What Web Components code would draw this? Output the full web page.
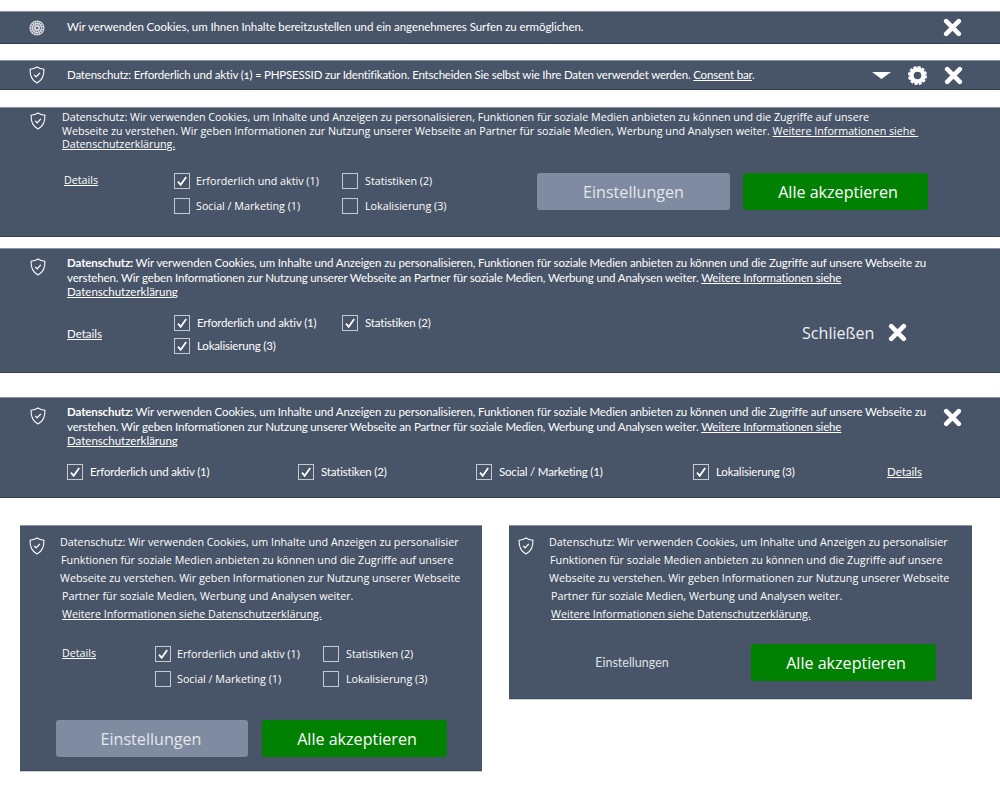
<!DOCTYPE html>
<html>
<head>
<meta charset="utf-8">
<style>
  html, body { margin: 0; padding: 0; background: #fff; }
  body { width: 1000px; height: 802px; overflow: hidden; font-family: "Open Sans", sans-serif; color: #fff; }
  .top1 { margin-top: 11px; height: 33px; --act-pad: 38px; --txt-pb: 1px; }
  .top2 { margin-top: 16px; height: 30px; }
  .top3 { margin-top: 17px; }
  .top4 { margin-top: 11px; }
  .top5 { margin-top: 24px; }
  .boxes { display: flex; align-items: flex-start; gap: 27px; margin: 27px 0 0 20px; }
</style>
</head>
<body>
  <cookie-bar class="top1" icon="cookie" style="--ls:-.07px">Wir verwenden Cookies, um Ihnen Inhalte bereitzustellen und ein angenehmeres Surfen zu ermöglichen.
    <close-x slot="actions"></close-x>
  </cookie-bar>

  <cookie-bar class="top2" icon="shield" style="--ls:-.19px">Datenschutz: Erforderlich und aktiv (1) = PHPSESSID zur Identifikation. Entscheiden Sie selbst wie Ihre Daten verwendet werden. <u>Consent bar</u>.
    <bar-actions slot="actions"></bar-actions>
  </cookie-bar>

  <banner-full class="top3"></banner-full>
  <banner-saved class="top4"></banner-saved>
  <banner-row class="top5"></banner-row>

  <div class="boxes">
    <cookie-box details="1"></cookie-box>
    <cookie-box style="width:463px"></cookie-box>
  </div>

<script>
  const SHIELD = `<svg width="16" height="18" viewBox="0 0 18 20" fill="none" stroke="#fff" stroke-width="1.2" style="display:block"><path d="M9 1C6.6 2.6 4 3.3 1.2 3.5C1 10 2.6 15.8 9 19C15.4 15.8 17 10 16.8 3.5C14 3.3 11.4 2.6 9 1Z"/><path d="M5.9 9.9L8 12.1L12.2 7.6" stroke-width="1.5"/></svg>`;
  const COOKIE = `<svg width="16" height="16" viewBox="0 0 16 16" style="display:block"><circle cx="8" cy="8" r="7.6" fill="#d4d8de"/><circle cx="8" cy="8" r="5.8" fill="none" stroke="#566074" stroke-width="1.1" stroke-dasharray="1.3 1"/><circle cx="8" cy="8" r="3.5" fill="none" stroke="#566074" stroke-width="1.1" stroke-dasharray="1.2 1"/><circle cx="8" cy="8" r="1.2" fill="#566074"/></svg>`;
  const CROSS = `<svg width="19" height="19" viewBox="0 0 19 19" style="display:block"><path d="M3.2 3.2L15.8 15.8M15.8 3.2L3.2 15.8" stroke="#fff" stroke-width="4.6" stroke-linecap="round"/></svg>`;
  const GRID_ITEMS = (a, b, c, d) => `
    <check-item ${a ? 'on' : ''}>Erforderlich und aktiv (1)</check-item><check-item ${b ? 'on' : ''}>Statistiken (2)</check-item>
    <check-item ${c ? 'on' : ''}>Social / Marketing (1)</check-item><check-item ${d ? 'on' : ''}>Lokalisierung (3)</check-item>`;
  const LONG = `<span style="letter-spacing:-.115px"><b>Datenschutz:</b> Wir verwenden Cookies, um Inhalte und Anzeigen zu personalisieren, Funktionen für soziale Medien anbieten zu können und die Zugriffe auf unsere Webseite zu</span><br><span style="letter-spacing:-.14px">verstehen. Wir geben Informationen zur Nutzung unserer Webseite an Partner für soziale Medien, Werbung und Analysen weiter. <u>Weitere Informationen siehe</u></span><br><u>Datenschutzerklärung</u>`;
  const PANEL = `background:#485467;border-top:1px solid #8a93a1;border-bottom:1px solid #343d4c;box-sizing:border-box;color:#fff;`;
  const SANS = `10.72px/16px "Open Sans",sans-serif`;
  const RALE = `11.5px/16px Lato,sans-serif`;

  class CloseX extends HTMLElement {
    connectedCallback() {
      this.attachShadow({ mode: 'open' }).innerHTML = `<style>:host{display:block;width:19px;height:19px;flex:none}</style>${CROSS}`;
    }
  }
  customElements.define('close-x', CloseX);

  class BarActions extends HTMLElement {
    connectedCallback() {
      this.attachShadow({ mode: 'open' }).innerHTML = `
        <style>:host{display:flex;align-items:center;gap:17px}</style>
        <svg width="19" height="7" viewBox="0 0 19 7"><path d="M0 0H19L9.5 7Z" fill="#fff"/></svg>
        <svg width="19" height="19" viewBox="0 0 19 19"><circle cx="9.5" cy="9.5" r="6" fill="none" stroke="#fff" stroke-width="4.4"/><circle cx="9.5" cy="9.5" r="8.6" fill="none" stroke="#fff" stroke-width="1.8" stroke-dasharray="3 1.5"/></svg>
        <close-x></close-x>`;
    }
  }
  customElements.define('bar-actions', BarActions);

  class CookieBar extends HTMLElement {
    connectedCallback() {
      const icon = this.getAttribute('icon') === 'cookie' ? COOKIE : SHIELD;
      this.attachShadow({ mode: 'open' }).innerHTML = `
        <style>
          :host{display:flex;align-items:center;${PANEL}font:${RALE};letter-spacing:var(--ls,0);font-variant-numeric:oldstyle-nums}
          .ico{width:67px;display:flex;padding-left:29px;box-sizing:border-box;flex:none}
          .txt{flex:1;white-space:nowrap;padding-bottom:var(--txt-pb,0)}
          .act{padding-right:var(--act-pad,37px);display:flex;align-items:center}
        </style>
        <div class="ico">${icon}</div>
        <div class="txt"><slot></slot></div>
        <div class="act"><slot name="actions"></slot></div>`;
    }
  }
  customElements.define('cookie-bar', CookieBar);

  class CheckItem extends HTMLElement {
    connectedCallback() {
      const on = this.hasAttribute('on');
      this.attachShadow({ mode: 'open' }).innerHTML = `
        <style>
          :host{display:inline-flex;align-items:center;gap:var(--check-gap,6px);white-space:nowrap;font:var(--check-font,${SANS});letter-spacing:var(--check-ls,0);color:#fff}
          .b{width:16px;height:16px;border:1px solid #c4c9d1;box-sizing:border-box;flex:none;display:block}
        </style>
        <svg class="b" viewBox="0 0 14 14">${on ? '<path d="M3 7.6L5.7 10.8L11.2 3" fill="none" stroke="#fff" stroke-width="1.8"/>' : ''}</svg>
        <span><slot></slot></span>`;
    }
  }
  customElements.define('check-item', CheckItem);

  class ActionButton extends HTMLElement {
    connectedCallback() {
      this.attachShadow({ mode: 'open' }).innerHTML = `
        <style>
          :host{display:flex;align-items:center;justify-content:center;height:37px;box-sizing:border-box;border-radius:3px;font:16.1px/20px "Open Sans",sans-serif;white-space:nowrap;background:#7f8ba0;color:#e4e7eb}
          :host([green]){background:#008000;color:#fff;padding-left:5px}
          :host([plain]){background:none;color:#dfe2e7;font:12.5px/16px Lato,sans-serif}
        </style><slot></slot>`;
    }
  }
  customElements.define('action-button', ActionButton);

  class BannerFull extends HTMLElement {
    connectedCallback() {
      this.attachShadow({ mode: 'open' }).innerHTML = `
        <style>
          :host{display:block;height:130px;${PANEL}padding-top:3px}
          .head{display:flex;gap:16px;padding-left:30px}
          .head svg{flex:none;margin-top:1px}
          .txt{font:10.72px/13.5px "Open Sans",sans-serif;white-space:nowrap}
          .row{display:flex;margin-top:21.5px;padding-left:64px}
          a{width:110px;font:${SANS};text-decoration:underline;flex:none;margin-top:-1px}
          .grid{display:grid;grid-template-columns:168px 195px;row-gap:8.5px;align-content:start}
          .grid check-item:nth-child(even){--check-gap:7px}
          .btns{display:flex;gap:13px}
          .b1{width:193px}.b2{width:185px}
        </style>
        <div class="head">${SHIELD}<div class="txt">Datenschutz: Wir verwenden Cookies, um Inhalte und Anzeigen zu personalisieren, Funktionen für soziale Medien anbieten zu können und die Zugriffe auf unsere<br>Webseite zu verstehen. Wir geben Informationen zur Nutzung unserer Webseite an Partner für soziale Medien, Werbung und Analysen weiter. <u>Weitere Informationen siehe&nbsp;</u><br><u>Datenschutzerklärung.</u></div></div>
        <div class="row">
          <a>Details</a>
          <div class="grid">${GRID_ITEMS(1, 0, 0, 0)}</div>
          <div class="btns"><action-button class="b1">Einstellungen</action-button><action-button class="b2" green>Alle akzeptieren</action-button></div>
        </div>`;
    }
  }
  customElements.define('banner-full', BannerFull);

  class BannerSaved extends HTMLElement {
    connectedCallback() {
      this.attachShadow({ mode: 'open' }).innerHTML = `
        <style>
          :host{display:block;height:125px;${PANEL}padding-top:7px;--check-font:${RALE};--check-ls:-.18px;--check-gap:7px;font-variant-numeric:oldstyle-nums}
          .head{display:flex;gap:21px;padding-left:30px}
          .head svg{flex:none;margin-top:2px}
          .txt{font:11.5px/14.6px Lato,sans-serif;white-space:nowrap}
          .row{display:flex;margin-top:15px;padding-left:67px}
          a{width:107px;font:${RALE};text-decoration:underline;flex:none;margin-top:11px}
          .grid{display:grid;grid-template-columns:168px 460px;row-gap:7px;align-content:start}
          .close{display:flex;align-items:center;gap:13px;font:16.1px/20px "Open Sans",sans-serif;color:#eef0f3;margin-top:8px;height:20px}
        </style>
        <div class="head">${SHIELD}<div class="txt">${LONG}</div></div>
        <div class="row">
          <a>Details</a>
          <div class="grid">
            <check-item on>Erforderlich und aktiv (1)</check-item><check-item on>Statistiken (2)</check-item>
            <check-item on>Lokalisierung (3)</check-item>
          </div>
          <div class="close">Schließen <close-x></close-x></div>
        </div>`;
    }
  }
  customElements.define('banner-saved', BannerSaved);

  class BannerRow extends HTMLElement {
    connectedCallback() {
      this.attachShadow({ mode: 'open' }).innerHTML = `
        <style>
          :host{display:block;height:101px;${PANEL}padding:7px 38px 0 0;--check-font:${RALE};--check-ls:-.18px;--check-gap:7px;font-variant-numeric:oldstyle-nums}
          .head{display:flex;gap:21px;padding-left:30px}
          .head svg{flex:none;margin-top:2px}
          .txt{flex:1;min-width:0;font:11.5px/14.6px Lato,sans-serif;white-space:nowrap}
          close-x{margin-top:3px}
          .row{display:grid;grid-template-columns:231px 178px 217px 194px auto;margin-top:15px;padding-left:67px;align-items:center}
          a{font:${RALE};text-decoration:underline}
        </style>
        <div class="head">${SHIELD}<div class="txt">${LONG}</div><close-x></close-x></div>
        <div class="row">
          <check-item on>Erforderlich und aktiv (1)</check-item>
          <check-item on>Statistiken (2)</check-item>
          <check-item on>Social / Marketing (1)</check-item>
          <check-item on>Lokalisierung (3)</check-item>
          <a>Details</a>
        </div>`;
    }
  }
  customElements.define('banner-row', BannerRow);

  class CookieBox extends HTMLElement {
    connectedCallback() {
      const details = this.hasAttribute('details');
      const mid = details ? `
        <div class="row">
          <a>Details</a>
          <div class="grid">${GRID_ITEMS(1, 0, 0, 0)}</div>
        </div>` : '';
      const btns = details
        ? `<div class="btns"><action-button class="b1">Einstellungen</action-button><action-button class="b2" green>Alle akzeptieren</action-button></div>`
        : `<div class="btns two"><action-button class="b1" plain>Einstellungen</action-button><action-button class="b2" green>Alle akzeptieren</action-button></div>`;
      this.attachShadow({ mode: 'open' }).innerHTML = `
        <style>
          :host{display:block;width:462px;height:${details ? 246 : 174}px;${PANEL}border-bottom-color:#3d4a60;box-shadow:0 1px 0 #ccd1d9;padding-top:7px}
          .head{display:flex;gap:15px;padding-left:9px}
          .head svg{flex:none;margin-top:4px}
          .txt{font:10.75px/18px "Open Sans",sans-serif;white-space:nowrap}
          .txt span{display:block}
          .row{display:flex;margin-top:23px;padding-left:42px}
          a{width:93px;flex:none;font:${SANS};text-decoration:underline;margin-top:-1px}
          .grid{display:grid;grid-template-columns:168px 130px;row-gap:9px}
          .grid check-item:nth-child(even){--check-gap:7px}
          .btns{display:flex;gap:14px;margin:33px 0 0 36px}
          .two{margin-top:21px;gap:32px}
          .b1{width:192px;padding-right:2px;box-sizing:border-box}.b2{width:185px}
          .two .b1{width:174px;padding-right:0}
        </style>
        <div class="head">${SHIELD}<div class="txt">
          <span>Datenschutz: Wir verwenden Cookies, um Inhalte und Anzeigen zu personalisier</span>
          <span style="margin-left:1px">Funktionen für soziale Medien anbieten zu können und die Zugriffe auf unsere</span>
          <span>Webseite zu verstehen. Wir geben Informationen zur Nutzung unserer Webseite</span>
          <span style="margin-left:2px">Partner für soziale Medien, Werbung und Analysen weiter.</span>
          <span style="margin-left:2px"><u>Weitere Informationen siehe Datenschutzerklärung.</u></span>
        </div></div>
        ${mid}${btns}`;
    }
  }
  customElements.define('cookie-box', CookieBox);
</script>
</body>
</html>
